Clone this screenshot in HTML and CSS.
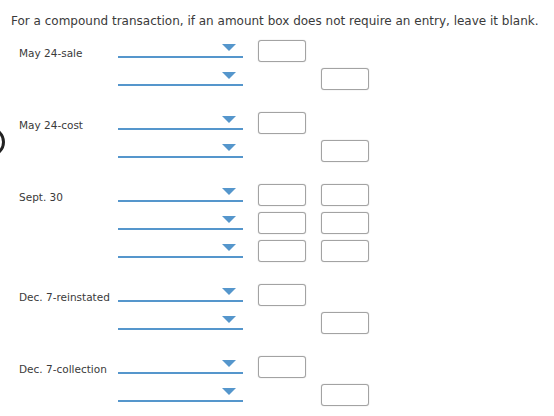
FILE: index.html
```html
<!DOCTYPE html>
<html>
<head>
<meta charset="utf-8">
<link rel="stylesheet" href="styles.css">
</head>
<body>
<div class="page">
  <p class="intro">For a compound transaction, if an amount box does not require an entry, leave it blank.</p>
  <div class="entries">
    <div class="section">
      <div class="label">May 24-sale</div>
      <div class="row"><div class="select"><span class="arrow"></span></div><div class="box"></div><div class="slot"></div></div>
      <div class="row"><div class="select"><span class="arrow"></span></div><div class="slot"></div><div class="box"></div></div>
    </div>
    <div class="section">
      <div class="label">May 24-cost</div>
      <div class="row"><div class="select"><span class="arrow"></span></div><div class="box"></div><div class="slot"></div></div>
      <div class="row"><div class="select"><span class="arrow"></span></div><div class="slot"></div><div class="box"></div></div>
    </div>
    <div class="section">
      <div class="label">Sept. 30</div>
      <div class="row"><div class="select"><span class="arrow"></span></div><div class="box"></div><div class="box"></div></div>
      <div class="row"><div class="select"><span class="arrow"></span></div><div class="box"></div><div class="box"></div></div>
      <div class="row"><div class="select"><span class="arrow"></span></div><div class="box"></div><div class="box"></div></div>
    </div>
    <div class="section">
      <div class="label">Dec. 7-reinstated</div>
      <div class="row"><div class="select"><span class="arrow"></span></div><div class="box"></div><div class="slot"></div></div>
      <div class="row"><div class="select"><span class="arrow"></span></div><div class="slot"></div><div class="box"></div></div>
    </div>
    <div class="section">
      <div class="label">Dec. 7-collection</div>
      <div class="row"><div class="select"><span class="arrow"></span></div><div class="box"></div><div class="slot"></div></div>
      <div class="row"><div class="select"><span class="arrow"></span></div><div class="slot"></div><div class="box"></div></div>
    </div>
  </div>
  <div class="edge-button"></div>
</div>
</body>
</html>
```

FILE: styles.css
```css
html, body {
  margin: 0;
  padding: 0;
  background: #ffffff;
}

.page {
  position: relative;
  width: 554px;
  height: 416px;
  overflow: hidden;
  font-family: "DejaVu Sans", Verdana, sans-serif;
  color: #3a3a3a;
}

.intro {
  margin: 0;
  padding: 14px 0 0 11px;
  font-size: 12px;
  line-height: 14px;
}

.entries {
  display: flex;
  flex-direction: column;
  gap: 22px;
  padding: 12px 0 0 19px;
}

.section {
  display: grid;
  grid-template-columns: 99px auto;
  grid-auto-rows: 22px;
  row-gap: 6px;
}

.label {
  grid-column: 1;
  grid-row: 1;
  align-self: end;
  font-size: 10.5px;
  line-height: 14px;
  padding-bottom: 2px;
  white-space: nowrap;
}

.row {
  grid-column: 2;
  display: flex;
  align-items: flex-end;
  gap: 15px;
}

.select {
  position: relative;
  width: 125px;
  height: 16px;
  border-bottom: 2px solid #5596cc;
  margin-bottom: 4px;
}

.arrow {
  position: absolute;
  right: 7px;
  bottom: 5px;
  width: 0;
  height: 0;
  border-left: 7px solid transparent;
  border-right: 7px solid transparent;
  border-top: 7px solid #5596cc;
}

.box {
  width: 46px;
  height: 20px;
  border: 1px solid #a3a3a3;
  border-radius: 3px;
  box-shadow: 0 0 1px #b0b0b0;
  background: #ffffff;
}

.slot {
  width: 48px;
  height: 22px;
}

.edge-button {
  position: absolute;
  left: -25px;
  top: 127px;
  width: 24px;
  height: 24px;
  border: 3px solid #222222;
  border-radius: 50%;
}
```
